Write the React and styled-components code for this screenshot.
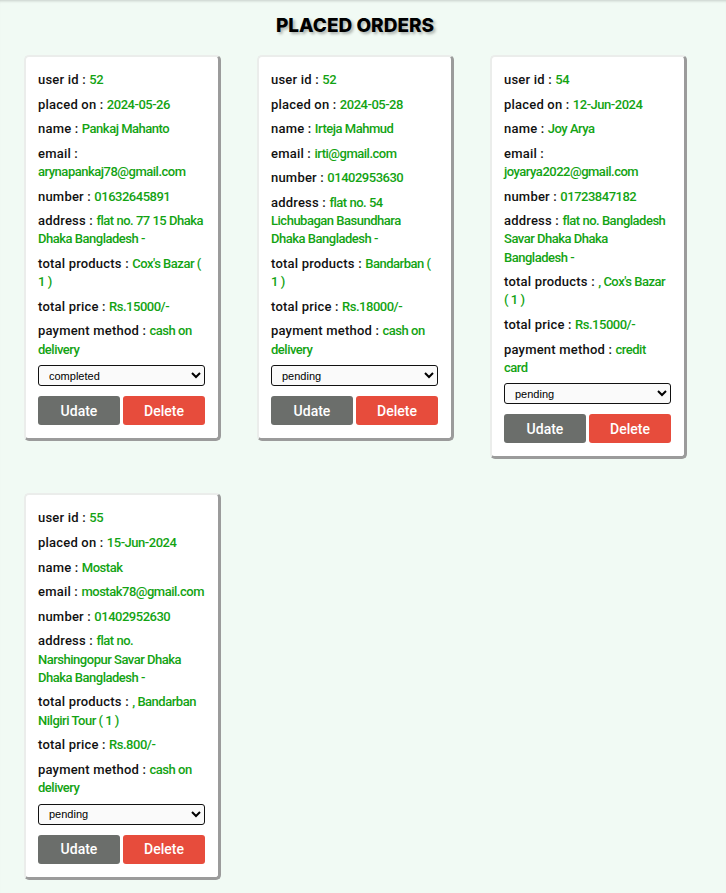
import React from "react";
import styled, { createGlobalStyle } from "styled-components";

const Global = createGlobalStyle`
  html, body { margin: 0; padding: 0; }
  body {
    background: #f1faf4;
    font-family: Roboto, "Noto Sans", sans-serif;
    color: #111;
  }
`;

const Page = styled.div`
  box-sizing: border-box;
  min-height: 893px;
  box-shadow: inset 0 3px 3px -2px rgba(0, 0, 0, 0.18);
  padding-top: 14px;
  padding-bottom: 12px;
`;

const Title = styled.h1`
  margin: 0;
  padding-right: 16px;
  text-align: center;
  font-family: Inter, Roboto, sans-serif;
  font-size: 19px;
  line-height: 24px;
  font-weight: 800;
  color: #000;
  text-shadow: 2px 2px 3px rgba(0, 0, 0, 0.3);
`;

const Grid = styled.div`
  margin-top: 17px;
  padding-left: 24px;
  display: grid;
  grid-template-columns: repeat(3, 197px);
  column-gap: 36px;
  row-gap: 34px;
  align-items: start;
`;

const Card = styled.div`
  box-sizing: border-box;
  width: 197px;
  background: #fff;
  border-top: 2px solid #ebedeb;
  border-left: 2px solid #ebedeb;
  border-right: 3px solid #9b9b9b;
  border-bottom: 3px solid #9b9b9b;
  border-radius: 5px;
  padding: 14px 13px 13px 12px;
  display: flex;
  flex-direction: column;
`;

const Info = styled.p`
  margin: 0 0 6.4px;
  font-size: 13px;
  line-height: 18.2px;
  font-weight: 500;
  letter-spacing: 0.2px;
  color: #111;
`;

const Value = styled.span`
  color: #13a313;
  letter-spacing: -0.49px;
`;

const Select = styled.select`
  width: 167px;
  height: 21px;
  font-family: "Liberation Sans", Arial, sans-serif;
  font-size: 11px;
  color: #000;
  background: #fafafa;
  border: 1px solid #111;
  border-radius: 3px;
  padding: 0 4px 0 6px;
`;

const Buttons = styled.div`
  margin-top: 10px;
  display: grid;
  grid-template-columns: 1fr 1fr;
  column-gap: 3px;
`;

const Button = styled.button`
  height: 29px;
  border: none;
  border-radius: 3px;
  background: ${(p) => (p.$danger ? "#e74c3c" : "#6b6e6b")};
  color: #fff;
  font-family: Roboto, "Noto Sans", sans-serif;
  font-size: 14px;
  font-weight: 500;
  padding: 0;
  cursor: pointer;
`;

const orders = [
  {
    id: "52",
    placed: "2024-05-26",
    name: "Pankaj Mahanto",
    email: "arynapankaj78@gmail.com",
    number: "01632645891",
    address: "flat no. 77 15 Dhaka Dhaka Bangladesh -",
    products: "Cox's Bazar ( 1\u00a0)",
    price: "Rs.15000/-",
    method: "cash on delivery",
    status: "completed",
  },
  {
    id: "52",
    placed: "2024-05-28",
    name: "Irteja Mahmud",
    email: "irti@gmail.com",
    number: "01402953630",
    address: "flat no. 54 Lichubagan Basundhara Dhaka\u00a0Bangladesh -",
    products: "Bandarban ( 1\u00a0)",
    price: "Rs.18000/-",
    method: "cash on delivery",
    status: "pending",
  },
  {
    id: "54",
    placed: "12-Jun-2024",
    name: "Joy Arya",
    email: "joyarya2022@gmail.com",
    number: "01723847182",
    address: "flat no. Bangladesh Savar Dhaka Dhaka Bangladesh -",
    products: ", Cox's Bazar (\u00a01\u00a0)",
    price: "Rs.15000/-",
    method: "credit card",
    status: "pending",
  },
  {
    id: "55",
    placed: "15-Jun-2024",
    name: "Mostak",
    email: "mostak78@gmail.com",
    number: "01402952630",
    address: "flat no. Narshingopur Savar Dhaka Dhaka Bangladesh -",
    products: ", Bandarban Nilgiri Tour ( 1 )",
    price: "Rs.800/-",
    method: "cash on delivery",
    status: "pending",
  },
];

function Row({ label, value }) {
  return (
    <Info>
      {label} : <Value>{value}</Value>
    </Info>
  );
}

export default function App() {
  return (
    <>
      <Global />
      <Page>
        <Title>PLACED ORDERS</Title>
        <Grid>
          {orders.map((o, i) => (
            <Card key={i}>
              <Row label="user id" value={o.id} />
              <Row label="placed on" value={o.placed} />
              <Row label="name" value={o.name} />
              <Row label="email" value={o.email} />
              <Row label="number" value={o.number} />
              <Row label="address" value={o.address} />
              <Row label="total products" value={o.products} />
              <Row label="total price" value={o.price} />
              <Row label="payment method" value={o.method} />
              <Select defaultValue={o.status}>
                <option value="pending">pending</option>
                <option value="completed">completed</option>
              </Select>
              <Buttons>
                <Button>Udate</Button>
                <Button $danger>Delete</Button>
              </Buttons>
            </Card>
          ))}
        </Grid>
      </Page>
    </>
  );
}
